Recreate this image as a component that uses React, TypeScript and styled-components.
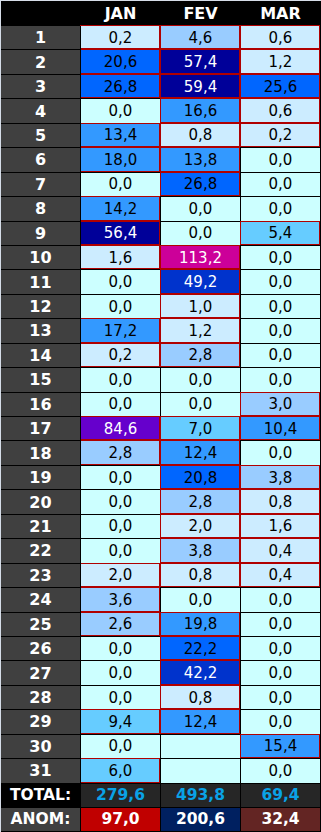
import React from 'react';
import styled, {createGlobalStyle, css} from 'styled-components';

const GlobalStyle = createGlobalStyle`
  body {
    margin: 0;
    background: #ffffff;
    font-family: 'DejaVu Sans', Verdana, sans-serif;
  }
`;

const Sheet = styled.div`
  display: grid;
  grid-template-columns: repeat(4, 80px);
  grid-template-rows: 25px repeat(31, 24.4516px) 24px 24px;
  width: 321px;
  padding: 1px 0 0 1px;
  box-sizing: border-box;
  background: #d6dde8;
`;

const Cell = styled.div`
  display: flex;
  align-items: center;
  justify-content: center;
  box-sizing: border-box;
  border-right: 1px solid #000;
  border-bottom: 1px solid #000;
  white-space: nowrap;
`;

const HeadCell = styled(Cell)`
  background: #000;
  color: #fff;
  font-weight: bold;
  font-size: 16px;
  padding-top: 1px;
`;

// day column sits above the red frames so its right edge stays black
const DayCell = styled(Cell)`
  position: relative;
  z-index: 2;
  background: #404040;
  color: #fff;
  font-weight: bold;
  font-size: 16px;
`;

const ValueCell = styled(Cell)<{$bg: string; $fg: string; $flag: boolean}>`
  background: ${({$bg}) => $bg};
  color: ${({$fg}) => $fg};
  font-size: 15px;
  ${({$flag}) =>
    $flag &&
    css`
      position: relative;
      z-index: 1;
      &::after {
        content: '';
        position: absolute;
        inset: -1px 0 0 -1px;
        border: 1px solid #b00000;
        pointer-events: none;
      }
    `}
`;

const TotalLabel = styled(Cell)`
  background: #000;
  color: #fff;
  font-weight: bold;
  font-size: 15.5px;
`;

const TotalCell = styled(Cell)`
  background: #262626;
  color: #0aa2e6;
  font-weight: bold;
  font-size: 15.5px;
`;

const AnomLabel = styled(Cell)`
  background: #404040;
  color: #fff;
  font-weight: bold;
  font-size: 15.5px;
`;

const AnomCell = styled(Cell)<{$bg: string}>`
  background: ${({$bg}) => $bg};
  color: #fff;
  font-weight: bold;
  font-size: 15.5px;
`;

type Val = number | null;

const months = ['JAN', 'FEV', 'MAR'];

const rain: Val[][] = [
  [0.2, 4.6, 0.6],
  [20.6, 57.4, 1.2],
  [26.8, 59.4, 25.6],
  [0, 16.6, 0.6],
  [13.4, 0.8, 0.2],
  [18, 13.8, 0],
  [0, 26.8, 0],
  [14.2, 0, 0],
  [56.4, 0, 5.4],
  [1.6, 113.2, 0],
  [0, 49.2, 0],
  [0, 1, 0],
  [17.2, 1.2, 0],
  [0.2, 2.8, 0],
  [0, 0, 0],
  [0, 0, 3],
  [84.6, 7, 10.4],
  [2.8, 12.4, 0],
  [0, 20.8, 3.8],
  [0, 2.8, 0.8],
  [0, 2, 1.6],
  [0, 3.8, 0.4],
  [2, 0.8, 0.4],
  [3.6, 0, 0],
  [2.6, 19.8, 0],
  [0, 22.2, 0],
  [0, 42.2, 0],
  [0, 0.8, 0],
  [9.4, 12.4, 0],
  [0, null, 15.4],
  [6, null, 0],
];

const totals = [279.6, 493.8, 69.4];
const anomalies = [
  {value: 97, bg: '#c00000'},
  {value: 200.6, bg: '#002060'},
  {value: 32.4, bg: '#632523'},
];

const fmt = (v: number) => v.toFixed(1).replace('.', ',');

const scale = (v: Val): {bg: string; fg: string} => {
  if (v === null || v === 0) return {bg: '#ccffff', fg: '#000'};
  if (v <= 2) return {bg: '#ccecff', fg: '#000'};
  if (v < 5) return {bg: '#99ccff', fg: '#000'};
  if (v < 10) return {bg: '#66ccff', fg: '#000'};
  if (v < 20) return {bg: '#3399ff', fg: '#000'};
  if (v < 40) return {bg: '#0066ff', fg: '#000'};
  if (v < 50) return {bg: '#0033cc', fg: '#fff'};
  if (v < 80) return {bg: '#000099', fg: '#fff'};
  if (v < 100) return {bg: '#6600cc', fg: '#fff'};
  return {bg: '#cc0099', fg: '#fff'};
};

const App: React.FunctionComponent = () => {
  return (
    <>
      <GlobalStyle />
      <Sheet>
        <HeadCell />
        {months.map((m) => (
          <HeadCell key={m}>{m}</HeadCell>
        ))}
        {rain.map((row, i) => (
          <React.Fragment key={i}>
            <DayCell>{i + 1}</DayCell>
            {row.map((v, j) => {
              const c = scale(v);
              return (
                <ValueCell key={j} $bg={c.bg} $fg={c.fg} $flag={v !== null && v > 0}>
                  {v === null ? '' : fmt(v)}
                </ValueCell>
              );
            })}
          </React.Fragment>
        ))}
        <TotalLabel>TOTAL:</TotalLabel>
        {totals.map((t, j) => (
          <TotalCell key={j}>{fmt(t)}</TotalCell>
        ))}
        <AnomLabel>ANOM:</AnomLabel>
        {anomalies.map((a, j) => (
          <AnomCell key={j} $bg={a.bg}>{fmt(a.value)}</AnomCell>
        ))}
      </Sheet>
    </>
  );
};

export default App;
